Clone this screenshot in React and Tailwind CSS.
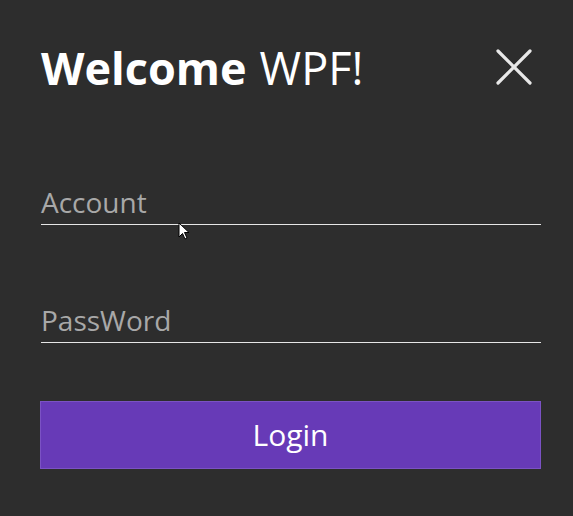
export default function App() {
  return (
    <div className="w-[573px] h-[516px] bg-[#2d2d2d] relative overflow-hidden" style={{ fontFamily: '"Open Sans", "Noto Sans", sans-serif' }}>
      <div className="flex flex-col pl-[40px] pr-[32px]">
        <div className="flex items-center justify-between h-[54px] mt-[40px] pl-[1px]">
          <h1 className="text-[45px] leading-none text-white flex items-baseline">
            <span className="font-bold">Welcome</span>
            <span className="ml-[13px]">WPF!</span>
          </h1>
          <svg width="36" height="36" viewBox="0 0 36 36" className="mr-[9px]">
            <path d="M2 2 L34 34 M34 2 L2 34" stroke="#e8e8e8" strokeWidth="3.2" strokeLinecap="round" />
          </svg>
        </div>
        <div className="mt-[90px] border-b border-[#e6e6e6] ml-[1px] h-[41px] flex items-end pb-[8px]">
          <span className="text-[28px] leading-none text-[#a8a8a8]">Account</span>
        </div>
        <div className="mt-[77px] border-b border-[#e6e6e6] ml-[1px] h-[41px] flex items-end pb-[8px]">
          <span className="text-[28px] leading-none text-[#a8a8a8]">PassWord</span>
        </div>
        <button className="mt-[58px] h-[68px] w-full bg-[#673ab7] border border-[#7b52c4] text-white text-[30px] leading-none flex items-center justify-center">
          Login
        </button>
      </div>
      <svg className="absolute left-[178px] top-[222px]" width="12" height="18" viewBox="0 0 12 18">
        <path d="M1 1 L1 15 L4.5 11.5 L7 17 L9 16 L6.5 10.5 L11 10.5 Z" fill="#fff" stroke="#000" strokeWidth="1" />
      </svg>
    </div>
  );
}
